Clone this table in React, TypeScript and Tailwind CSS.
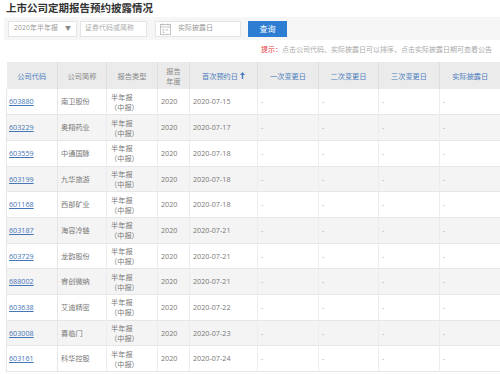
import React from 'react';

type Row = { code: string; name: string; date: string };

const rows: Row[] = [
  { code: '603880', name: '南卫股份', date: '2020-07-15' },
  { code: '603229', name: '奥翔药业', date: '2020-07-17' },
  { code: '603559', name: '中通国脉', date: '2020-07-18' },
  { code: '603199', name: '九华旅游', date: '2020-07-18' },
  { code: '601168', name: '西部矿业', date: '2020-07-18' },
  { code: '603187', name: '海容冷链', date: '2020-07-21' },
  { code: '603729', name: '龙韵股份', date: '2020-07-21' },
  { code: '688002', name: '睿创微纳', date: '2020-07-21' },
  { code: '603638', name: '艾迪精密', date: '2020-07-22' },
  { code: '603008', name: '喜临门', date: '2020-07-23' },
  { code: '603161', name: '科华控股', date: '2020-07-24' },
];

const font = { fontFamily: '"Open Sans", "Noto Sans CJK SC", sans-serif' };

function CalendarIcon() {
  return (
    <svg width="11" height="12" viewBox="0 0 11 12" fill="none" stroke="#b5b5b5" strokeWidth="0.8">
      <rect x="0.5" y="1.5" width="10" height="10" />
      <line x1="0.5" y1="4" x2="10.5" y2="4" />
      <line x1="3" y1="0.5" x2="3" y2="2.5" />
      <line x1="8" y1="0.5" x2="8" y2="2.5" />
      <rect x="2.5" y="6" width="2" height="1.5" fill="#ccc" stroke="none" />
      <rect x="6" y="6" width="2" height="1.5" fill="#ccc" stroke="none" />
      <rect x="2.5" y="8.5" width="2" height="1.5" fill="#ccc" stroke="none" />
    </svg>
  );
}

export default function App() {
  return (
    <div className="w-[500px] h-[374px] overflow-hidden bg-white text-[#777]" style={font}>
      {/* title */}
      <h1 className="pl-[6px] pt-[1px] h-[16px] leading-[14px] text-[10.5px] font-bold text-[#333]">
        上市公司定期报告预约披露情况
      </h1>

      {/* filter bar */}
      <div className="mt-[1px] h-[23px] ml-[4px] bg-[#f6f6f6] flex items-center pl-[4px]">
        <div className="w-[69px] h-[16px] bg-white border border-[#e4e4e4] flex items-center justify-between px-[5px] text-[7px] text-[#999]">
          <span>2020年半年报</span>
          <span className="text-[6px] text-[#888]">▼</span>
        </div>
        <div className="ml-[3px] w-[67px] h-[16px] bg-white border border-[#e4e4e4] flex items-center pl-[4px] text-[7px] text-[#aaa]">
          证券代码或简称
        </div>
        <div className="ml-[8px] w-[86px] h-[16px] bg-white border border-[#e4e4e4] flex items-center pl-[4px] gap-[7px] text-[7px] text-[#999]">
          <CalendarIcon />
          <span>实际披露日</span>
        </div>
        <button className="ml-[7px] w-[39px] h-[16px] bg-[#2d7dd2] text-white text-[8px] flex items-center justify-center">
          查询
        </button>
      </div>

      {/* tip */}
      <div className="mt-[5px] h-[10px] leading-[10px] pr-[8px] text-right text-[7px] text-[#aaa]">
        <span className="text-[#e43c3c]">提示：</span>点击公司代码、实际披露日可以排序，点击实际披露日期可查看公告
      </div>

      {/* table */}
      <table className="mt-[7px] ml-[6px] w-[494px] table-fixed border-collapse text-[7.2px]">
        <colgroup>
          <col className="w-[51px]" />
          <col className="w-[49px]" />
          <col className="w-[51px]" />
          <col className="w-[32px]" />
          <col className="w-[68px]" />
          <col className="w-[61px]" />
          <col className="w-[60px]" />
          <col className="w-[61px]" />
          <col className="w-[61px]" />
        </colgroup>
        <thead>
          <tr className="h-[27px] bg-[#ebebeb] leading-[10px]">
            <th className="font-normal text-[#4a7dbd] border-r border-[#dedede]">公司代码</th>
            <th className="font-normal text-[#888] border-r border-[#dedede]">公司简称</th>
            <th className="font-normal text-[#888] border-r border-[#dedede]">报告类型</th>
            <th className="font-normal text-[#888] border-r border-[#dedede]">
              报告
              <br />
              年度
            </th>
            <th className="font-normal text-[#4a7dbd] border-r border-[#dedede]">
              <span className="inline-flex items-center gap-[2px]">
                首次预约日
                <svg width="5" height="7" viewBox="0 0 5 7" fill="#4a7dbd">
                  <path d="M2.5 0 L5 3 L3.2 3 L3.2 7 L1.8 7 L1.8 3 L0 3 Z" />
                </svg>
              </span>
            </th>
            <th className="font-normal text-[#4a7dbd] border-r border-[#dedede]">一次变更日</th>
            <th className="font-normal text-[#4a7dbd] border-r border-[#dedede]">二次变更日</th>
            <th className="font-normal text-[#4a7dbd] border-r border-[#dedede]">三次变更日</th>
            <th className="font-normal text-[#4a7dbd]">实际披露日</th>
          </tr>
        </thead>
        <tbody>
          {rows.map((r, i) => (
            <tr
              key={r.code}
              className={`h-[25.7px] border-b border-[#e6e6e6] ${i % 2 === 0 ? 'bg-white' : 'bg-[#f4f4f4]'}`}
            >
              <td className="pl-[2px] border-l border-r border-[#e6e6e6]">
                <a href="#" className="text-[#4576b6] underline">{r.code}</a>
              </td>
              <td className="pl-[3px] border-r border-[#ececec]">{r.name}</td>
              <td className="pl-[4px] border-r border-[#ececec] leading-[10px]">
                半年报
                <br />
                <span className="-ml-[1px]">（中报）</span>
              </td>
              <td className="pl-[3px] border-r border-[#ececec]">2020</td>
              <td className="pl-[3px] border-r border-[#ececec]">{r.date}</td>
              <td className="pl-[3px] border-r border-[#ececec] text-[#aaa]">-</td>
              <td className="pl-[3px] border-r border-[#ececec] text-[#aaa]">-</td>
              <td className="pl-[3px] border-r border-[#ececec] text-[#aaa]">-</td>
              <td className="pl-[3px] text-[#aaa]">-</td>
            </tr>
          ))}
        </tbody>
      </table>
    </div>
  );
}
